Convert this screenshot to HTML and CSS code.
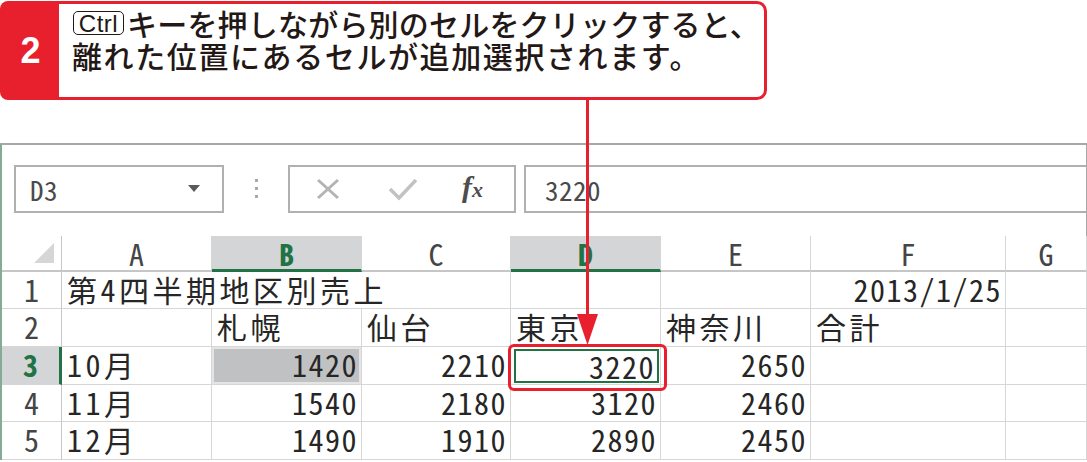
FILE: index.html
```html
<!DOCTYPE html>
<html lang="ja">
<head>
<meta charset="utf-8">
<title>Excel</title>
<link rel="stylesheet" href="styles.css">
</head>
<body>
<div class="page">
  <div class="callout">
    <div class="badge">2</div>
    <div class="msg">
      <p class="line line1"><span class="key">Ctrl</span>キーを押しながら別のセルをクリックすると、</p>
      <p class="line line2">離れた位置にあるセルが追加選択されます。</p>
    </div>
  </div>

  <div class="sheet">
    <div class="ribbon">
      <div class="namebox">
        <span class="nb-text">D3</span>
        <svg class="caret" width="12" height="8" viewBox="0 0 12 8"><path d="M0 0H12L6 7Z" fill="#5a5a5a"/></svg>
      </div>
      <div class="grip"><i></i><i></i><i></i></div>
      <div class="fbtns">
        <svg class="ic-x" width="26" height="22" viewBox="0 0 26 22"><path d="M3 2L23 20M23 2L3 20" stroke="#b4b4b4" stroke-width="3" fill="none"/></svg>
        <svg class="ic-ok" width="30" height="24" viewBox="0 0 30 24"><path d="M2 12L11 21L28 3" stroke="#c2c2c2" stroke-width="3.5" fill="none"/></svg>
        <span class="fx"><span class="fx-f">f</span><span class="fx-x">x</span></span>
      </div>
      <div class="fbox">3220</div>
    </div>

    <div class="grid">
      <div class="c corner"><svg width="20" height="20" viewBox="0 0 20 20"><path d="M20 0V20H0Z" fill="#d6d6d6"/></svg></div>
      <div class="c ch">A</div>
      <div class="c ch sel">B</div>
      <div class="c ch">C</div>
      <div class="c ch sel">D</div>
      <div class="c ch">E</div>
      <div class="c ch">F</div>
      <div class="c ch">G</div>

      <div class="c rh">1</div>
      <div class="c jp span3">第4四半期地区別売上</div>
      <div class="c"></div>
      <div class="c"></div>
      <div class="c num">2013/1/25</div>
      <div class="c"></div>

      <div class="c rh">2</div>
      <div class="c"></div>
      <div class="c jp">札幌</div>
      <div class="c jp">仙台</div>
      <div class="c jp">東京</div>
      <div class="c jp">神奈川</div>
      <div class="c jp">合計</div>
      <div class="c"></div>

      <div class="c rh rsel">3</div>
      <div class="c jp">10月</div>
      <div class="c num picked">1420</div>
      <div class="c num">2210</div>
      <div class="c active"><div class="act-frame num">3220</div></div>
      <div class="c num">2650</div>
      <div class="c"></div>
      <div class="c"></div>

      <div class="c rh">4</div>
      <div class="c jp">11月</div>
      <div class="c num">1540</div>
      <div class="c num">2180</div>
      <div class="c num">3120</div>
      <div class="c num">2460</div>
      <div class="c"></div>
      <div class="c"></div>

      <div class="c rh">5</div>
      <div class="c jp">12月</div>
      <div class="c num">1490</div>
      <div class="c num">1910</div>
      <div class="c num">2890</div>
      <div class="c num">2450</div>
      <div class="c"></div>
      <div class="c"></div>
    </div>
  </div>

  <div class="annot-box"></div>
  <svg class="arrow" width="1087" height="462" viewBox="0 0 1087 462">
    <path d="M587.5 99V318" stroke="#e8202e" stroke-width="3" fill="none"/>
    <path d="M577 313H598L587.5 344Z" fill="#e8202e"/>
  </svg>
</div>
</body>
</html>
```

FILE: styles.css
```css
html, body {
  margin: 0;
  padding: 0;
  background: #ffffff;
}
body {
  width: 1087px;
  height: 462px;
  overflow: hidden;
}
.page {
  position: relative;
  width: 1087px;
  height: 462px;
}

/* ---------- callout ---------- */
.callout {
  display: flex;
  margin-top: 1px;
  height: 99px;
  width: 767px;
}
.badge {
  width: 59px;
  background: #e8202e;
  border-radius: 8px 0 0 8px;
  color: #ffffff;
  font-family: "Liberation Sans", Arial, sans-serif;
  font-weight: 700;
  font-size: 36px;
  display: flex;
  align-items: center;
  justify-content: center;
  padding-left: 2px;
  box-sizing: border-box;
}
.msg {
  flex: 1;
  border: 3px solid #e8202e;
  border-left: 0;
  border-radius: 0 10px 10px 0;
  box-sizing: border-box;
  padding: 3px 0 0 13px;
}
.line {
  margin: 0;
  height: 32px;
  line-height: 32px;
  font-family: "Noto Sans CJK JP", sans-serif;
  font-weight: 500;
  font-size: 30px;
  color: #231815;
  white-space: nowrap;
  display: flex;
  align-items: center;
}
.line1 { letter-spacing: 0.2px; }
.line2 { letter-spacing: 1.6px; }
.key {
  display: inline-flex;
  align-items: center;
  justify-content: center;
  width: 51px;
  height: 24px;
  box-sizing: border-box;
  border: 1.5px solid #231815;
  border-radius: 5px;
  font-family: "Liberation Sans", Arial, sans-serif;
  font-weight: 400;
  font-size: 24px;
  line-height: 21px;
  letter-spacing: 0.5px;
  margin: 0 3px 0 1px;
}

/* ---------- sheet ---------- */
.sheet {
  margin-top: 43px;
  border-top: 2px solid #a8a8a8;
  border-left: 2px solid #86aa98;
}
.ribbon {
  height: 91px;
  box-sizing: border-box;
  padding: 20px 0 0 12px;
  display: flex;
  align-items: flex-start;
  border-right: 1px solid #a8a8a8;
}
.namebox, .fbtns, .fbox {
  height: 48px;
  box-sizing: border-box;
  border: 2px solid #b0b0b0;
  display: flex;
  align-items: center;
}
.namebox {
  width: 210px;
  padding: 0 22px 0 14px;
  justify-content: space-between;
}
.nb-text, .fbox {
  font-family: "Noto Sans Mono CJK JP", "Noto Sans CJK JP", monospace;
  font-size: 27px;
  color: #4a4a4a;
  letter-spacing: 0.5px;
}
.grip {
  margin: 14px 0 0 31px;
  width: 3px;
  display: flex;
  flex-direction: column;
  gap: 5px;
}
.grip i {
  display: block;
  width: 3px;
  height: 3px;
  background: #a8a8a8;
}
.fbtns {
  margin-left: 30px;
  width: 228px;
  padding-left: 25px;
}
.ic-x { margin-right: 47px; }
.ic-ok { margin-right: 44px; }
.fx {
  font-family: "Liberation Serif", "Times New Roman", serif;
  font-style: italic;
  font-weight: 700;
  color: #4d4d4d;
  font-size: 30px;
  display: inline-flex;
  align-items: baseline;
  margin-top: -4px;
}
.fx-x { font-size: 22px; margin-left: 0; }
.fbox {
  margin-left: 8px;
  flex: 1;
  border-right: 0;
  padding-left: 19px;
}

/* ---------- grid ---------- */
.grid {
  display: grid;
  grid-template-columns: 60px 150px 150px 149px 150px 150px 195px 1fr;
  grid-template-rows: 36px 37px 38px 38px 37px 38px;
  font-family: "Noto Sans Mono CJK JP", "Noto Sans CJK JP", monospace;
  font-size: 30px;
  color: #262626;
}
.c {
  box-sizing: border-box;
  border-right: 1px solid #d6d6d6;
  border-bottom: 1px solid #d6d6d6;
  line-height: 35px;
  white-space: nowrap;
  padding: 0 4px;
}
.span3 { grid-column: span 3; }
.jp { letter-spacing: 3.5px; padding-left: 5px; }
.num { text-align: right; letter-spacing: 1.5px; padding-right: 3px; }

.corner {
  display: flex;
  align-items: flex-end;
  justify-content: flex-end;
  padding: 0 7px 7px 0;
  border-bottom: 2px solid #c6c6c6;
  border-right-color: #c6c6c6;
}
.ch {
  text-align: center;
  color: #454545;
  border-bottom: 2px solid #c6c6c6;
  line-height: 33px;
  padding-top: 1px;
}
.ch.sel {
  background: #d4d5d7;
  color: #217346;
  font-weight: 700;
  border-bottom: 3px solid #217346;
  line-height: 32px;
}
.rh {
  text-align: center;
  color: #454545;
  border-right-color: #c6c6c6;
  padding: 0;
}
.rh.rsel {
  background: #d4d5d7;
  color: #217346;
  font-weight: 700;
  border-right: 3px solid #217346;
}
.picked {
  background: #c0c1c3;
  box-shadow: inset 0 0 0 2px #e4e4e4;
}
.active {
  padding: 2px 1px 1px 3px;
}
.act-frame {
  height: 100%;
  box-sizing: border-box;
  border: 2px solid #217346;
  line-height: 30px;
  padding-right: 2px;
}

/* ---------- annotation overlay ---------- */
.annot-box {
  position: absolute;
  left: 508px;
  top: 343px;
  width: 159px;
  height: 47px;
  box-sizing: border-box;
  border: 3px solid #e8202e;
  border-radius: 6px;
}
.arrow {
  position: absolute;
  left: 0;
  top: 0;
  pointer-events: none;
}
```
